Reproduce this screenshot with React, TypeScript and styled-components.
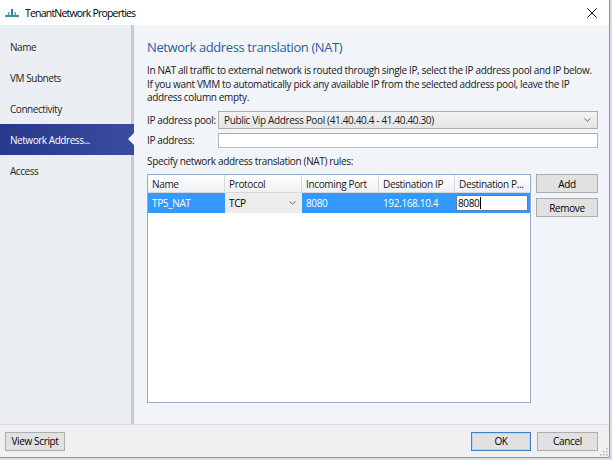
import React from "react";
import styled, { createGlobalStyle, css } from "styled-components";

const GlobalStyle = createGlobalStyle`
  html, body {
    margin: 0;
    padding: 0;
    background: #d3dfeb;
  }
  body {
    font-family: "Open Sans", "Noto Sans", "Liberation Sans", sans-serif;
    font-size: 10px;
    letter-spacing: -0.35px;
    color: #1a1a1a;
  }
  * { box-sizing: border-box; }
`;

const Window = styled.div`
  width: 610px;
  height: 458px;
  display: flex;
  flex-direction: column;
  background: #f1f4f8;
  border-right: 1px solid #5c9fdc;
  border-bottom: 1px solid #5c9fdc;
`;

const TitleBar = styled.div`
  height: 25px;
  background: #ffffff;
  display: flex;
  align-items: center;
  padding: 0 12px 0 5px;
  gap: 6px;
  font-size: 10.5px;
  letter-spacing: -0.8px;
  color: #000;
`;

const Title = styled.span`
  flex: 1;
`;

const Body = styled.div`
  flex: 1;
  display: flex;
  min-height: 0;
`;

const Nav = styled.nav`
  width: 134px;
  background: #ebeef2;
  border-right: 3px solid #c8cbd0;
  padding-top: 6px;
  display: flex;
  flex-direction: column;
`;

const NavItem = styled.div<{ $active?: boolean }>`
  position: relative;
  height: 31px;
  display: flex;
  align-items: center;
  padding-left: 10px;
  font-size: 10px;
  letter-spacing: -0.45px;
  color: #1e1e1e;
  ${(p) =>
    p.$active &&
    css`
      margin-right: -3px;
      background: linear-gradient(to right, #27398b, #3a4c9f);
      color: #ffffff;
      &::after {
        content: "";
        position: absolute;
        right: 0;
        top: 9px;
        border-style: solid;
        border-width: 6px 6px 6px 0;
        border-color: transparent #f4f6f9 transparent transparent;
      }
    `}
`;

const Content = styled.main`
  flex: 1;
  display: flex;
  flex-direction: column;
  padding: 13px 11px 21px 13px;
`;

const Heading = styled.h1`
  margin: 0;
  font-size: 13px;
  letter-spacing: -0.4px;
  font-weight: 400;
  line-height: 18px;
  color: #2b5ca8;
`;

const Paragraph = styled.p`
  margin: 8px 0 0;
  line-height: 13.5px;
`;

const FieldRow = styled.div<{ $gap?: number }>`
  display: grid;
  grid-template-columns: 71px 1fr;
  align-items: center;
  margin-top: ${(p) => p.$gap ?? 0}px;
  white-space: nowrap;
`;

const SelectBox = styled.div`
  height: 18px;
  display: flex;
  align-items: center;
  padding: 0 6px 0 5px;
  background: linear-gradient(#f2f2f2, #e4e4e4);
  border: 1px solid #acacac;
  & > span {
    flex: 1;
  }
`;

const TextInput = styled.div`
  height: 15px;
  background: #ffffff;
  border: 1px solid #b7bbc2;
  border-top-color: #a9acb3;
`;

const Caption = styled.div`
  margin-top: 7px;
  line-height: 13.5px;
`;

const TableArea = styled.div`
  flex: 1;
  display: flex;
  gap: 5px;
  margin-top: 6px;
  min-height: 0;
`;

const Table = styled.div`
  width: 384px;
  background: #ffffff;
  border: 1px solid #94abc9;
  display: flex;
  flex-direction: column;
`;

const Columns = "77px 77px 77px 76px 1fr";

const HeaderRow = styled.div`
  display: grid;
  grid-template-columns: ${Columns};
  height: 18px;
`;

const HeaderCell = styled.div`
  display: flex;
  align-items: center;
  padding-left: 4px;
  background: linear-gradient(#ffffff, #eef0f3);
  border-right: 1px solid #d6d8dc;
  border-bottom: 1px solid #d6d8dc;
  white-space: nowrap;
  overflow: hidden;
  &:last-child {
    border-right: none;
  }
`;

const DataRow = styled.div`
  display: grid;
  grid-template-columns: ${Columns};
  height: 20px;
`;

const Cell = styled.div<{ $kind?: "selected" | "combo" | "edit" }>`
  display: flex;
  align-items: center;
  padding-left: 4px;
  white-space: nowrap;
  ${(p) =>
    p.$kind === "selected" &&
    css`
      background: #3399ff;
      color: #ffffff;
    `}
  ${(p) =>
    p.$kind === "combo" &&
    css`
      background: #ececec;
      color: #000;
      padding: 0 6px 0 4px;
      & > span {
        flex: 1;
      }
    `}
  ${(p) =>
    p.$kind === "edit" &&
    css`
      background: #3399ff;
      padding: 2px 2px 2px 1px;
    `}
`;

const EditBox = styled.div`
  flex: 1;
  height: 100%;
  background: #ffffff;
  border: 1px solid #5f7ea8;
  display: flex;
  align-items: center;
  padding-left: 1px;
  color: #000;
`;

const Caret = styled.span`
  width: 1px;
  height: 12px;
  background: #000;
  margin-left: 1px;
`;

const SideButtons = styled.div`
  display: flex;
  flex-direction: column;
  gap: 5px;
`;

const Button = styled.button<{ $width?: number; $default?: boolean }>`
  width: ${(p) => p.$width ?? 62}px;
  height: 19px;
  padding: 0;
  font: inherit;
  letter-spacing: inherit;
  color: #000;
  background: #e1e1e1;
  border: 1px solid ${(p) => (p.$default ? "#3c82c4" : "#adadad")};
  box-shadow: ${(p) => (p.$default ? "inset 0 0 0 1px #b9d6f2" : "none")};
`;

const Footer = styled.footer`
  height: 33px;
  display: flex;
  align-items: center;
  gap: 6px;
  padding: 0 11px 0 5px;
  background: #f0f0f0;
  border-top: 1px solid #dcdfe3;
  position: relative;
`;

const Spacer = styled.div`
  flex: 1;
`;

const Grip = styled.svg`
  position: absolute;
  right: 1px;
  bottom: 1px;
`;

const Chevron = () => (
  <svg width="7" height="4" viewBox="0 0 7 4">
    <path d="M0.5 0.5 L3.5 3.2 L6.5 0.5" fill="none" stroke="#6b6b6b" strokeWidth="1" />
  </svg>
);

const AppIcon = () => (
  <svg width="14" height="10" viewBox="0 0 14 10">
    <rect x="0" y="7" width="14" height="2" fill="#3f8fa3" />
    <rect x="3" y="4" width="1.5" height="3" fill="#5aa7b8" />
    <rect x="6" y="1" width="2" height="6" fill="#2f7f93" />
    <rect x="9.5" y="4" width="1.5" height="3" fill="#5aa7b8" />
  </svg>
);

const CloseIcon = () => (
  <svg width="10" height="10" viewBox="0 0 10 10">
    <path d="M0.5 0.5 L9.5 9.5 M9.5 0.5 L0.5 9.5" stroke="#111" strokeWidth="1" />
  </svg>
);

const navItems = ["Name", "VM Subnets", "Connectivity", "Network Address...", "Access"];

export default function App() {
  return (
    <>
      <GlobalStyle />
      <Window>
        <TitleBar>
          <AppIcon />
          <Title>TenantNetwork Properties</Title>
          <CloseIcon />
        </TitleBar>
        <Body>
          <Nav>
            {navItems.map((item) => (
              <NavItem key={item} $active={item === "Network Address..."}>
                {item}
              </NavItem>
            ))}
          </Nav>
          <Content>
            <Heading>Network address translation (NAT)</Heading>
            <Paragraph>
              In NAT all traffic to external network is routed through single IP, select the IP
              address pool and IP below.
              <br />
              If you want VMM to automatically pick any available IP from the selected address
              pool, leave the IP address column empty.
            </Paragraph>
            <FieldRow $gap={6}>
              <span>IP address pool:</span>
              <SelectBox>
                <span>Public Vip Address Pool (41.40.40.4 - 41.40.40.30)</span>
                <Chevron />
              </SelectBox>
            </FieldRow>
            <FieldRow $gap={4}>
              <span>IP address:</span>
              <TextInput />
            </FieldRow>
            <Caption>Specify network address translation (NAT) rules:</Caption>
            <TableArea>
              <Table>
                <HeaderRow>
                  <HeaderCell>Name</HeaderCell>
                  <HeaderCell>Protocol</HeaderCell>
                  <HeaderCell>Incoming Port</HeaderCell>
                  <HeaderCell>Destination IP</HeaderCell>
                  <HeaderCell>Destination P...</HeaderCell>
                </HeaderRow>
                <DataRow>
                  <Cell $kind="selected">TP5_NAT</Cell>
                  <Cell $kind="combo">
                    <span>TCP</span>
                    <Chevron />
                  </Cell>
                  <Cell $kind="selected">8080</Cell>
                  <Cell $kind="selected">192.168.10.4</Cell>
                  <Cell $kind="edit">
                    <EditBox>
                      8080
                      <Caret />
                    </EditBox>
                  </Cell>
                </DataRow>
              </Table>
              <SideButtons>
                <Button>Add</Button>
                <Button>Remove</Button>
              </SideButtons>
            </TableArea>
          </Content>
        </Body>
        <Footer>
          <Button $width={60}>View Script</Button>
          <Spacer />
          <Button $width={60} $default>
            OK
          </Button>
          <Button $width={61}>Cancel</Button>
          <Grip width="8" height="8" viewBox="0 0 8 8">
            <g fill="#b5b5b5">
              <rect x="6" y="0" width="1.5" height="1.5" />
              <rect x="3" y="3" width="1.5" height="1.5" />
              <rect x="6" y="3" width="1.5" height="1.5" />
              <rect x="0" y="6" width="1.5" height="1.5" />
              <rect x="3" y="6" width="1.5" height="1.5" />
              <rect x="6" y="6" width="1.5" height="1.5" />
            </g>
          </Grip>
        </Footer>
      </Window>
    </>
  );
}
